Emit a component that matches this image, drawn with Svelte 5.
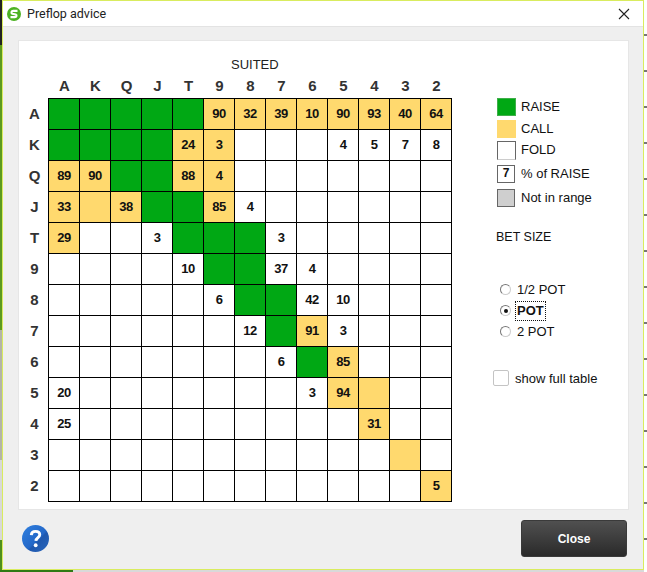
<script>
  const ranks = ['A','K','Q','J','T','9','8','7','6','5','4','3','2'];
  const g = 'g', y = 'y';
  // each row: only non-empty cells, by column index
  const data = [
    {0:g,1:g,2:g,3:g,4:g,5:[y,90],6:[y,32],7:[y,39],8:[y,10],9:[y,90],10:[y,93],11:[y,40],12:[y,64]},
    {0:g,1:g,2:g,3:g,4:[y,24],5:[y,3],9:4,10:5,11:7,12:8},
    {0:[y,89],1:[y,90],2:g,3:g,4:[y,88],5:[y,4]},
    {0:[y,33],1:[y,''],2:[y,38],3:g,4:g,5:[y,85],6:4},
    {0:[y,29],3:3,4:g,5:g,6:g,7:3},
    {4:10,5:g,6:g,7:37,8:4},
    {5:6,6:g,7:g,8:42,9:10},
    {6:12,7:g,8:[y,91],9:3},
    {7:6,8:g,9:[y,85]},
    {0:20,8:3,9:[y,94],10:[y,'']},
    {0:25,10:[y,31]},
    {11:[y,'']},
    {12:[y,5]}
  ];
  function cell(r, c) {
    const v = data[r][c];
    if (v === undefined) return { cls: '', text: '' };
    if (v === g) return { cls: 'green', text: '' };
    if (Array.isArray(v)) return { cls: 'yellow', text: v[1] };
    return { cls: '', text: v };
  }
</script>

<div class="screen">
  <div class="dialog">
    <header class="titlebar">
      <svg class="logo" width="14" height="14" viewBox="0 0 16 16" aria-hidden="true">
        <circle cx="8" cy="8" r="8" fill="#4db224"/>
        <path d="M12 4.4H7C5 4.4 4.4 6.9 6 7.7L10 8.5C11.6 9.3 11 11.6 9 11.6H4" fill="none" stroke="#fff" stroke-width="2.4"/>
      </svg>
      <span class="title">Preflop advice</span>
      <svg class="x" width="12" height="12" viewBox="0 0 12 12" aria-hidden="true">
        <path d="M1 1L11 11M11 1L1 11" stroke="#222" stroke-width="1.1" fill="none"/>
      </svg>
    </header>

    <section class="panel">
      <div class="chart">
        <div class="suited">SUITED</div>
        <div class="heads">
          {#each ranks as r}<span>{r}</span>{/each}
        </div>
        <div class="body">
          <div class="labels">
            {#each ranks as r}<span>{r}</span>{/each}
          </div>
          <div class="matrix">
            {#each ranks as _, r}
              {#each ranks as __, c}
                {@const x = cell(r, c)}
                <div class="cell {x.cls}">{x.text}</div>
              {/each}
            {/each}
          </div>
        </div>
      </div>

      <aside class="side">
        <ul class="legend">
          <li class="r-raise"><i class="sw raise"></i>RAISE</li>
          <li class="r-call"><i class="sw call"></i>CALL</li>
          <li class="r-fold"><i class="sw fold"></i>FOLD</li>
          <li class="r-pct"><i class="sw pct">7</i>% of RAISE</li>
          <li class="r-nir"><i class="sw nir"></i>Not in range</li>
        </ul>
        <div class="betsize">BET SIZE</div>
        <div class="radios">
          <label><input type="radio" name="bet" /><span>1/2 POT</span></label>
          <label><input type="radio" name="bet" checked /><span class="focus">POT</span></label>
          <label><input type="radio" name="bet" /><span>2 POT</span></label>
        </div>
        <label class="full"><input type="checkbox" /><span>show full table</span></label>
      </aside>
    </section>

    <footer class="foot">
      <svg class="help" width="27" height="27" viewBox="0 0 28 28" aria-hidden="true">
        <defs>
          <linearGradient id="hb" x1="0" y1="0" x2="1" y2="1">
            <stop offset="0" stop-color="#2f80e0"/>
            <stop offset="0.55" stop-color="#2468c8"/>
            <stop offset="0.6" stop-color="#1f58ae"/>
            <stop offset="1" stop-color="#2a66bc"/>
          </linearGradient>
        </defs>
        <circle cx="14" cy="14" r="14" fill="url(#hb)"/>
        <path d="M9.6 10.4C9.8 7.8 11.6 6.6 14 6.6C16.6 6.6 18.4 8 18.4 10.2C18.4 13 14.6 13.2 14.4 16.4" fill="none" stroke="#fff" stroke-width="3"/>
        <circle cx="14.2" cy="21" r="2" fill="#fff"/>
      </svg>
      <button class="close" type="button">Close</button>
    </footer>
  </div>
</div>

<style>
  :global(body) { margin: 0; }
  * { box-sizing: border-box; }
  .screen {
    width: 647px;
    height: 572px;
    overflow: hidden;
    padding: 0 3px 2px 2px;
    font-family: "Liberation Sans", Arial, sans-serif;
    background:
      linear-gradient(to right, #2f7a14 0 73px, transparent 73px) left bottom / 100% 2px no-repeat,
      linear-gradient(to bottom, #222 0 45px, #5c9a1e 45px 330px, #b4b4a8 330px 460px, #d8d8d8 460px 540px, #4f8f1c 540px) left top / 2px 100% no-repeat,
      repeating-linear-gradient(to bottom, #fff 0 34px, #777 34px 36px) right top / 3px 100% no-repeat,
      #d9d9d9;
  }
  .dialog {
    height: 100%;
    display: flex;
    flex-direction: column;
    background: #efefef;
    border: 1px solid #d9ec5e;
  }
  .titlebar {
    height: 26px;
    flex: none;
    display: flex;
    align-items: center;
    padding: 0 13px 0 4px;
    background: #fff;
    border-bottom: 1px solid #e3e3e3;
  }
  .title { margin-left: 6px; font: 12.5px Roboto, "Noto Sans", sans-serif; color: #222; }
  .x { margin-left: auto; }

  .panel {
    margin: 13px 14px 0 15px;
    height: 470px;
    flex: none;
    display: flex;
    background: #fff;
    border: 1px solid #e6e6e6;
  }
  .chart { width: 433px; padding-top: 16px; }
  .suited {
    height: 16px;
    margin-left: 212px;
    font-size: 13px;
    line-height: 16px;
    color: #222;
  }
  .heads {
    margin: 5px 0 4px 30px;
    height: 16px;
    display: grid;
    grid-template-columns: repeat(13, 31px);
    text-align: center;
    font-weight: bold;
    font-size: 15px;
    line-height: 16px;
    color: #333;
  }
  .body { display: flex; }
  .labels {
    width: 29px;
    padding: 1px 0 0 2px;
    display: grid;
    grid-auto-rows: 31px;
    text-align: center;
    font-weight: bold;
    font-size: 15px;
    line-height: 30px;
    color: #333;
  }
  .matrix {
    width: 404px;
    height: 404px;
    display: grid;
    grid-template-columns: repeat(13, 31px);
    grid-auto-rows: 31px;
    border-left: 1px solid #000;
    border-top: 1px solid #000;
  }
  .cell {
    border-right: 1px solid #000;
    border-bottom: 1px solid #000;
    text-align: center;
    font-weight: bold;
    font-size: 13px;
    letter-spacing: -0.5px;
    line-height: 30px;
    color: #111;
  }
  .green { background: #00a814; }
  .yellow { background: #ffd96e; }

  .side { flex: 1; padding: 57px 0 0 41px; color: #111; font-size: 13px; }
  .legend { list-style: none; margin: 0; padding: 0 0 0 4px; }
  .legend li { display: flex; align-items: flex-start; line-height: 18px; }
  .sw { display: block; flex: none; width: 19px; height: 18px; margin-right: 5px; }
  .r-raise { height: 22px; }
  .r-call { height: 21px; }
  .r-fold { height: 24px; }
  .r-pct { height: 24px; }
  .r-nir { height: 18px; }
  .raise { background: #00a814; border: 1px solid #3fae4a; }
  .call { background: #ffd96e; }
  .fold { background: #fff; border: 1px solid #666; border-bottom-color: #ccc; height: 19px; }
  .pct {
    width: 18px;
    margin-right: 6px;
    background: #fff;
    border: 1px solid #666;
    font: bold 12px/15px "Liberation Sans", sans-serif;
    text-align: center;
  }
  .nir { width: 18px; margin-right: 6px; background: #cfcfcf; border: 1px solid #666; }
  .betsize { margin: 22px 0 0 3px; height: 16px; line-height: 16px; font-size: 12.5px; }
  .radios { margin-top: 34px; padding-left: 7px; display: flex; flex-direction: column; }
  .radios label { height: 21px; display: flex; align-items: center; }
  input[type="radio"] {
    appearance: none;
    margin: 0 6px 0 0;
    width: 11px;
    height: 11px;
    border-radius: 50%;
    border: 1px solid #777;
    border-right-color: #ccc;
    border-bottom-color: #ccc;
    background: #fff;
    position: relative;
  }
  input[type="radio"]:checked::after {
    content: "";
    position: absolute;
    left: 2.5px;
    top: 2.5px;
    width: 4px;
    height: 4px;
    border-radius: 50%;
    background: #111;
  }
  .focus {
    padding: 0 1px;
    margin-left: -1px;
    outline: 1px dotted #111;
    font-weight: 600;
    line-height: 18px;
  }
  .full { margin-top: 28px; display: flex; align-items: center; font-size: 13px; }
  input[type="checkbox"] {
    appearance: none;
    margin: 0 6px 0 0;
    width: 16px;
    height: 16px;
    border: 1px solid #c4c4c4;
    border-radius: 2px;
    background: #fff;
  }

  .foot {
    flex: 1;
    display: flex;
    align-items: flex-start;
    justify-content: space-between;
    padding: 10px 16px 0 19px;
  }
  .help { margin-top: 5px; }
  .close {
    width: 106px;
    height: 37px;
    padding: 0;
    border: 1px solid #3a3a3a;
    border-radius: 3px;
    background: linear-gradient(to bottom, #505050, #2a2a2a);
    color: #fff;
    font: bold 12px "Liberation Sans", sans-serif;
  }
</style>
